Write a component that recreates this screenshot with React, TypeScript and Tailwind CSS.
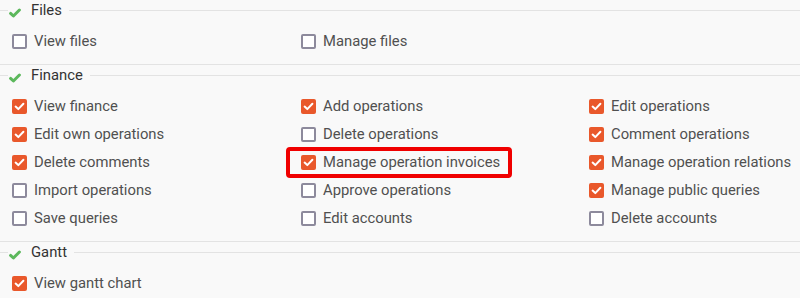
type Perm = { label: string; checked: boolean; highlight?: boolean };

const sections: { title: string; items: Perm[] }[] = [
  {
    title: "Files",
    items: [
      { label: "View files", checked: false },
      { label: "Manage files", checked: false },
    ],
  },
  {
    title: "Finance",
    items: [
      { label: "View finance", checked: true },
      { label: "Add operations", checked: true },
      { label: "Edit operations", checked: true },
      { label: "Edit own operations", checked: true },
      { label: "Delete operations", checked: false },
      { label: "Comment operations", checked: true },
      { label: "Delete comments", checked: true },
      { label: "Manage operation invoices", checked: true, highlight: true },
      { label: "Manage operation relations", checked: true },
      { label: "Import operations", checked: false },
      { label: "Approve operations", checked: false },
      { label: "Manage public queries", checked: true },
      { label: "Save queries", checked: false },
      { label: "Edit accounts", checked: false },
      { label: "Delete accounts", checked: false },
    ],
  },
  {
    title: "Gantt",
    items: [{ label: "View gantt chart", checked: true }],
  },
];

function GreenCheck() {
  return (
    <svg width="12" height="10" viewBox="0 0 12 10" className="ml-[1px] mr-[3px] mt-[5px] shrink-0">
      <path d="M1.6 5.4 L4.4 8 L10.4 2" fill="none" stroke="#5cb85c" strokeWidth="3" strokeLinecap="round" strokeLinejoin="round" />
    </svg>
  );
}

function Checkbox({ checked }: { checked: boolean }) {
  if (checked) {
    return (
      <span className="flex h-[15px] w-[15px] shrink-0 items-center justify-center rounded-[2px] bg-[#e9582b]">
        <svg width="11" height="9" viewBox="0 0 11 9">
          <path d="M1.6 4.6 L4.3 7.1 L9.4 1.8" fill="none" stroke="#fff" strokeWidth="2" strokeLinecap="round" strokeLinejoin="round" />
        </svg>
      </span>
    );
  }
  return <span className="h-[15px] w-[15px] shrink-0 rounded-[2px] border-2 border-[#8d8a9c] bg-white" />;
}

function Item({ perm }: { perm: Perm }) {
  return (
    <div className="flex h-[28px] items-center">
      <label
        className={
          perm.highlight
            ? "-ml-[3px] flex h-[31px] items-center gap-[7px] rounded-[4px] border-4 border-[#f00000] pl-[11px] pr-[8px]"
            : "flex items-center gap-[7px] pl-[12px]"
        }
      >
        <Checkbox checked={perm.checked} />
        <span className="text-[14.8px] text-[#505050]">{perm.label}</span>
      </label>
    </div>
  );
}

export default function App() {
  return (
    <main className="h-[298px] w-[800px] overflow-hidden bg-[#f9f9f9] font-['Roboto',sans-serif]">
      {sections.map((s, i) => (
        <section key={s.title} className={i < sections.length - 1 ? "border-b border-[#e3e3e3] pb-[9px]" : ""}>
          <div className="flex h-[20px] items-center">
            <div className="h-px w-[8px] bg-[#e3e3e3]" />
            <GreenCheck />
            <span className="px-[7px] text-[14.8px] leading-none text-[#333]">{s.title}</span>
            <div className="h-px flex-1 bg-[#e3e3e3]" />
          </div>
          <div className="mt-[7px] grid grid-cols-[289px_288px_288px]">
            {s.items.map((p) => (
              <Item key={p.label} perm={p} />
            ))}
          </div>
        </section>
      ))}
    </main>
  );
}
